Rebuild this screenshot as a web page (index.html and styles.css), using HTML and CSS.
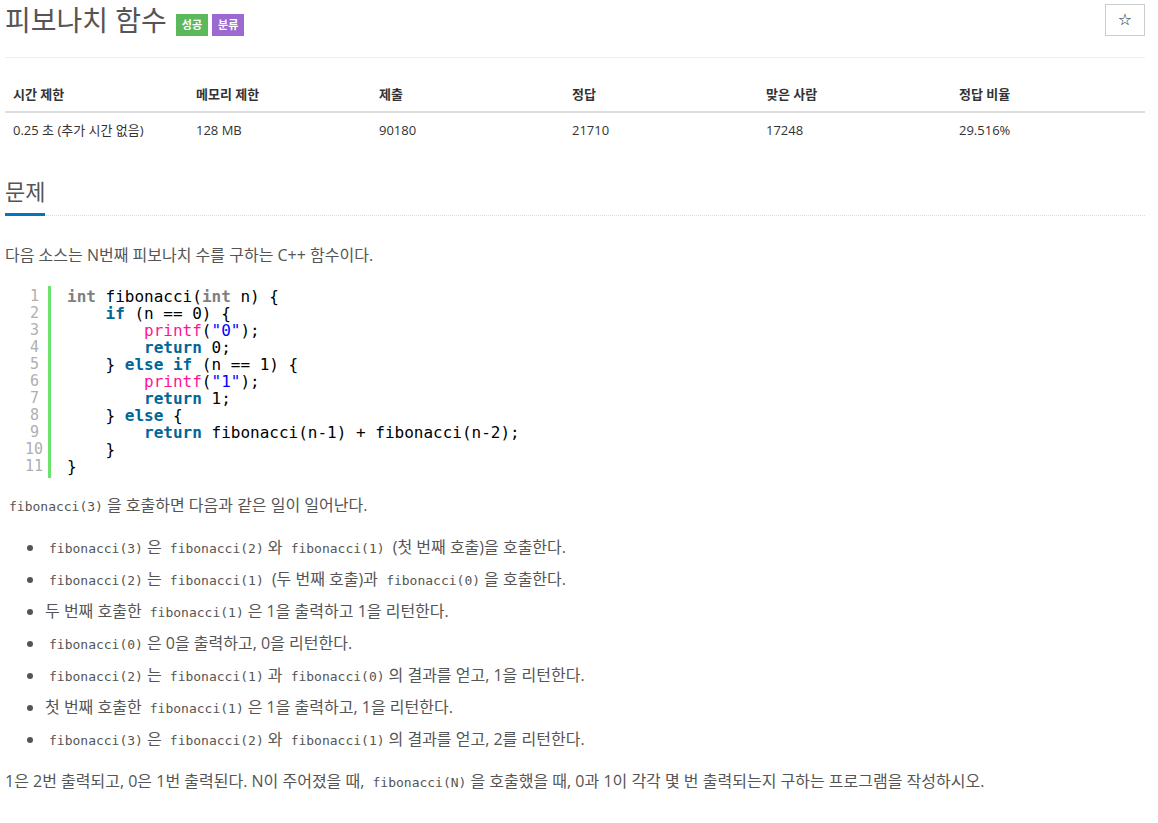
FILE: index.html
```html
<!DOCTYPE html>
<html lang="ko">
<head>
<meta charset="utf-8">
<title>피보나치 함수</title>
<link rel="stylesheet" href="styles.css">
</head>
<body>
<div class="page">
  <div class="title-row">
    <h1 class="title">피보나치 함수 <span class="badge badge-green">성공</span><span class="badge badge-purple">분류</span></h1>
    <button class="star-btn" type="button">☆</button>
  </div>
  <div class="rule"></div>

  <table class="info">
    <thead>
      <tr>
        <th class="c1">시간 제한</th>
        <th class="c2">메모리 제한</th>
        <th class="c3">제출</th>
        <th class="c4">정답</th>
        <th class="c5">맞은 사람</th>
        <th class="c6">정답 비율</th>
      </tr>
    </thead>
    <tbody>
      <tr>
        <td>0.25 초 (추가 시간 없음)</td>
        <td>128 MB</td>
        <td>90180</td>
        <td>21710</td>
        <td>17248</td>
        <td>29.516%</td>
      </tr>
    </tbody>
  </table>

  <div class="headline"><h2 class="headline-text">문제</h2></div>

  <div class="problem">
    <p class="lead">다음 소스는 N번째 피보나치 수를 구하는 C++ 함수이다.</p>

    <div class="code">
      <div class="gutter">
        <div>1</div><div>2</div><div>3</div><div>4</div><div>5</div><div>6</div><div>7</div><div>8</div><div>9</div><div>10</div><div>11</div>
      </div>
      <div class="lines">
        <div class="ln"><span class="dt">int</span> fibonacci(<span class="dt">int</span> n) {</div>
        <div class="ln">    <span class="kw">if</span> (n == 0) {</div>
        <div class="ln">        <span class="fn">printf</span>(<span class="str">"0"</span>);</div>
        <div class="ln">        <span class="kw">return</span> 0;</div>
        <div class="ln">    } <span class="kw">else</span> <span class="kw">if</span> (n == 1) {</div>
        <div class="ln">        <span class="fn">printf</span>(<span class="str">"1"</span>);</div>
        <div class="ln">        <span class="kw">return</span> 1;</div>
        <div class="ln">    } <span class="kw">else</span> {</div>
        <div class="ln">        <span class="kw">return</span> fibonacci(n-1) + fibonacci(n-2);</div>
        <div class="ln">    }</div>
        <div class="ln">}</div>
      </div>
    </div>

    <p class="para"><code>fibonacci(3)</code>을 호출하면 다음과 같은 일이 일어난다.</p>

    <ul class="steps">
      <li><code>fibonacci(3)</code>은 <code>fibonacci(2)</code>와 <code>fibonacci(1)</code> (첫 번째 호출)을 호출한다.</li>
      <li><code>fibonacci(2)</code>는 <code>fibonacci(1)</code> (두 번째 호출)과 <code>fibonacci(0)</code>을 호출한다.</li>
      <li>두 번째 호출한 <code>fibonacci(1)</code>은 1을 출력하고 1을 리턴한다.</li>
      <li><code>fibonacci(0)</code>은 0을 출력하고, 0을 리턴한다.</li>
      <li><code>fibonacci(2)</code>는 <code>fibonacci(1)</code>과 <code>fibonacci(0)</code>의 결과를 얻고, 1을 리턴한다.</li>
      <li>첫 번째 호출한 <code>fibonacci(1)</code>은 1을 출력하고, 1을 리턴한다.</li>
      <li><code>fibonacci(3)</code>은 <code>fibonacci(2)</code>와 <code>fibonacci(1)</code>의 결과를 얻고, 2를 리턴한다.</li>
    </ul>

    <p class="para last">1은 2번 출력되고, 0은 1번 출력된다. N이 주어졌을 때, <code>fibonacci(N)</code>을 호출했을 때, 0과 1이 각각 몇 번 출력되는지 구하는 프로그램을 작성하시오.</p>
  </div>
</div>
</body>
</html>
```

FILE: styles.css
```css
* { box-sizing: border-box; }

html, body {
  margin: 0;
  padding: 0;
  background: #fff;
}

body {
  font-family: "Open Sans", "Noto Sans CJK KR", sans-serif;
  font-size: 16px;
  color: #555;
}

.page {
  width: 1150px;
  padding: 0 5px;
}

.title-row {
  display: flex;
  justify-content: space-between;
  align-items: flex-start;
  height: 50px;
}

.title {
  margin: 0;
  padding-top: 0;
  font-size: 28px;
  font-weight: 400;
  line-height: 40px;
  color: #555;
  display: flex;
  align-items: center;
}

.badge {
  display: inline-block;
  height: 22px;
  line-height: 22px;
  padding: 0 6px;
  font-size: 11px;
  font-weight: 700;
  color: #fff;
  margin-top: 9px;
}

.badge-green {
  background: #5cb85c;
  margin-left: 9px;
}

.badge-purple {
  background: #9b69cf;
  margin-left: 4px;
}

.star-btn {
  margin-top: 4px;
  width: 40px;
  height: 32px;
  border: 1px solid #ccc;
  background: #fff;
  color: #222;
  font-size: 16px;
  line-height: 16px;
  font-family: "DejaVu Sans", sans-serif;
  padding: 0;
}

.rule {
  border-top: 1px solid #eee;
  margin-top: 7px;
}

.info {
  width: 100%;
  border-collapse: collapse;
  margin-top: 21px;
  font-size: 13px;
}

.info th, .info td {
  text-align: left;
  padding: 8px 8px;
  line-height: 18px;
}

.info th {
  font-weight: 700;
  color: #333;
  border-bottom: 2px solid #ddd;
  padding-top: 6px;
  padding-bottom: 8px;
}

.info td {
  padding-top: 8px;
  padding-bottom: 8px;
  color: #333;
}

.c1 { width: 183px; }
.c2 { width: 183px; }
.c3 { width: 193px; }
.c4 { width: 194px; }
.c5 { width: 193px; }

.headline {
  margin-top: 29px;
  border-bottom: 1px dotted #ddd;
}

.headline-text {
  display: inline-block;
  margin: 0 0 -1px 0;
  font-size: 22px;
  font-weight: 400;
  line-height: 30px;
  color: #555;
  padding-bottom: 7px;
  border-bottom: 3px solid #0076c0;
  vertical-align: bottom;
}

.problem {
  padding-top: 28px;
}

.lead {
  margin: 0;
  line-height: 22px;
}

.code {
  display: flex;
  margin-top: 20px;
  margin-left: 20px;
  font-family: "DejaVu Sans Mono", monospace;
  font-size: 16px;
  line-height: 17px;
}

.gutter {
  text-align: right;
  color: #afafaf;
  width: 26px;
  padding-right: 9px;
  border-right: 3px solid #6ce26c;
  padding-top: 2px;
  padding-bottom: 3px;
  font-size: 15px;
}

.gutter div {
  height: 17px;
}

.lines {
  padding-left: 16px;
  padding-top: 2px;
  color: #000;
}

.ln {
  height: 17px;
  white-space: pre;
}

.dt { color: #808080; font-weight: 700; }
.kw { color: #006699; font-weight: 700; }
.fn { color: #ff1493; }
.str { color: #0000ff; }

.para {
  margin: 0;
  margin-top: 16px;
  line-height: 22px;
}

code {
  font-family: "DejaVu Sans Mono", monospace;
  font-size: 13px;
  line-height: 1;
  color: #555;
  padding: 2px 4px;
}

.steps {
  margin: 20px 0 0 0;
  padding-left: 40px;
}

.steps li {
  line-height: 22px;
  margin-bottom: 10px;
}

.para.last {
  margin-top: 20px;
}
```
